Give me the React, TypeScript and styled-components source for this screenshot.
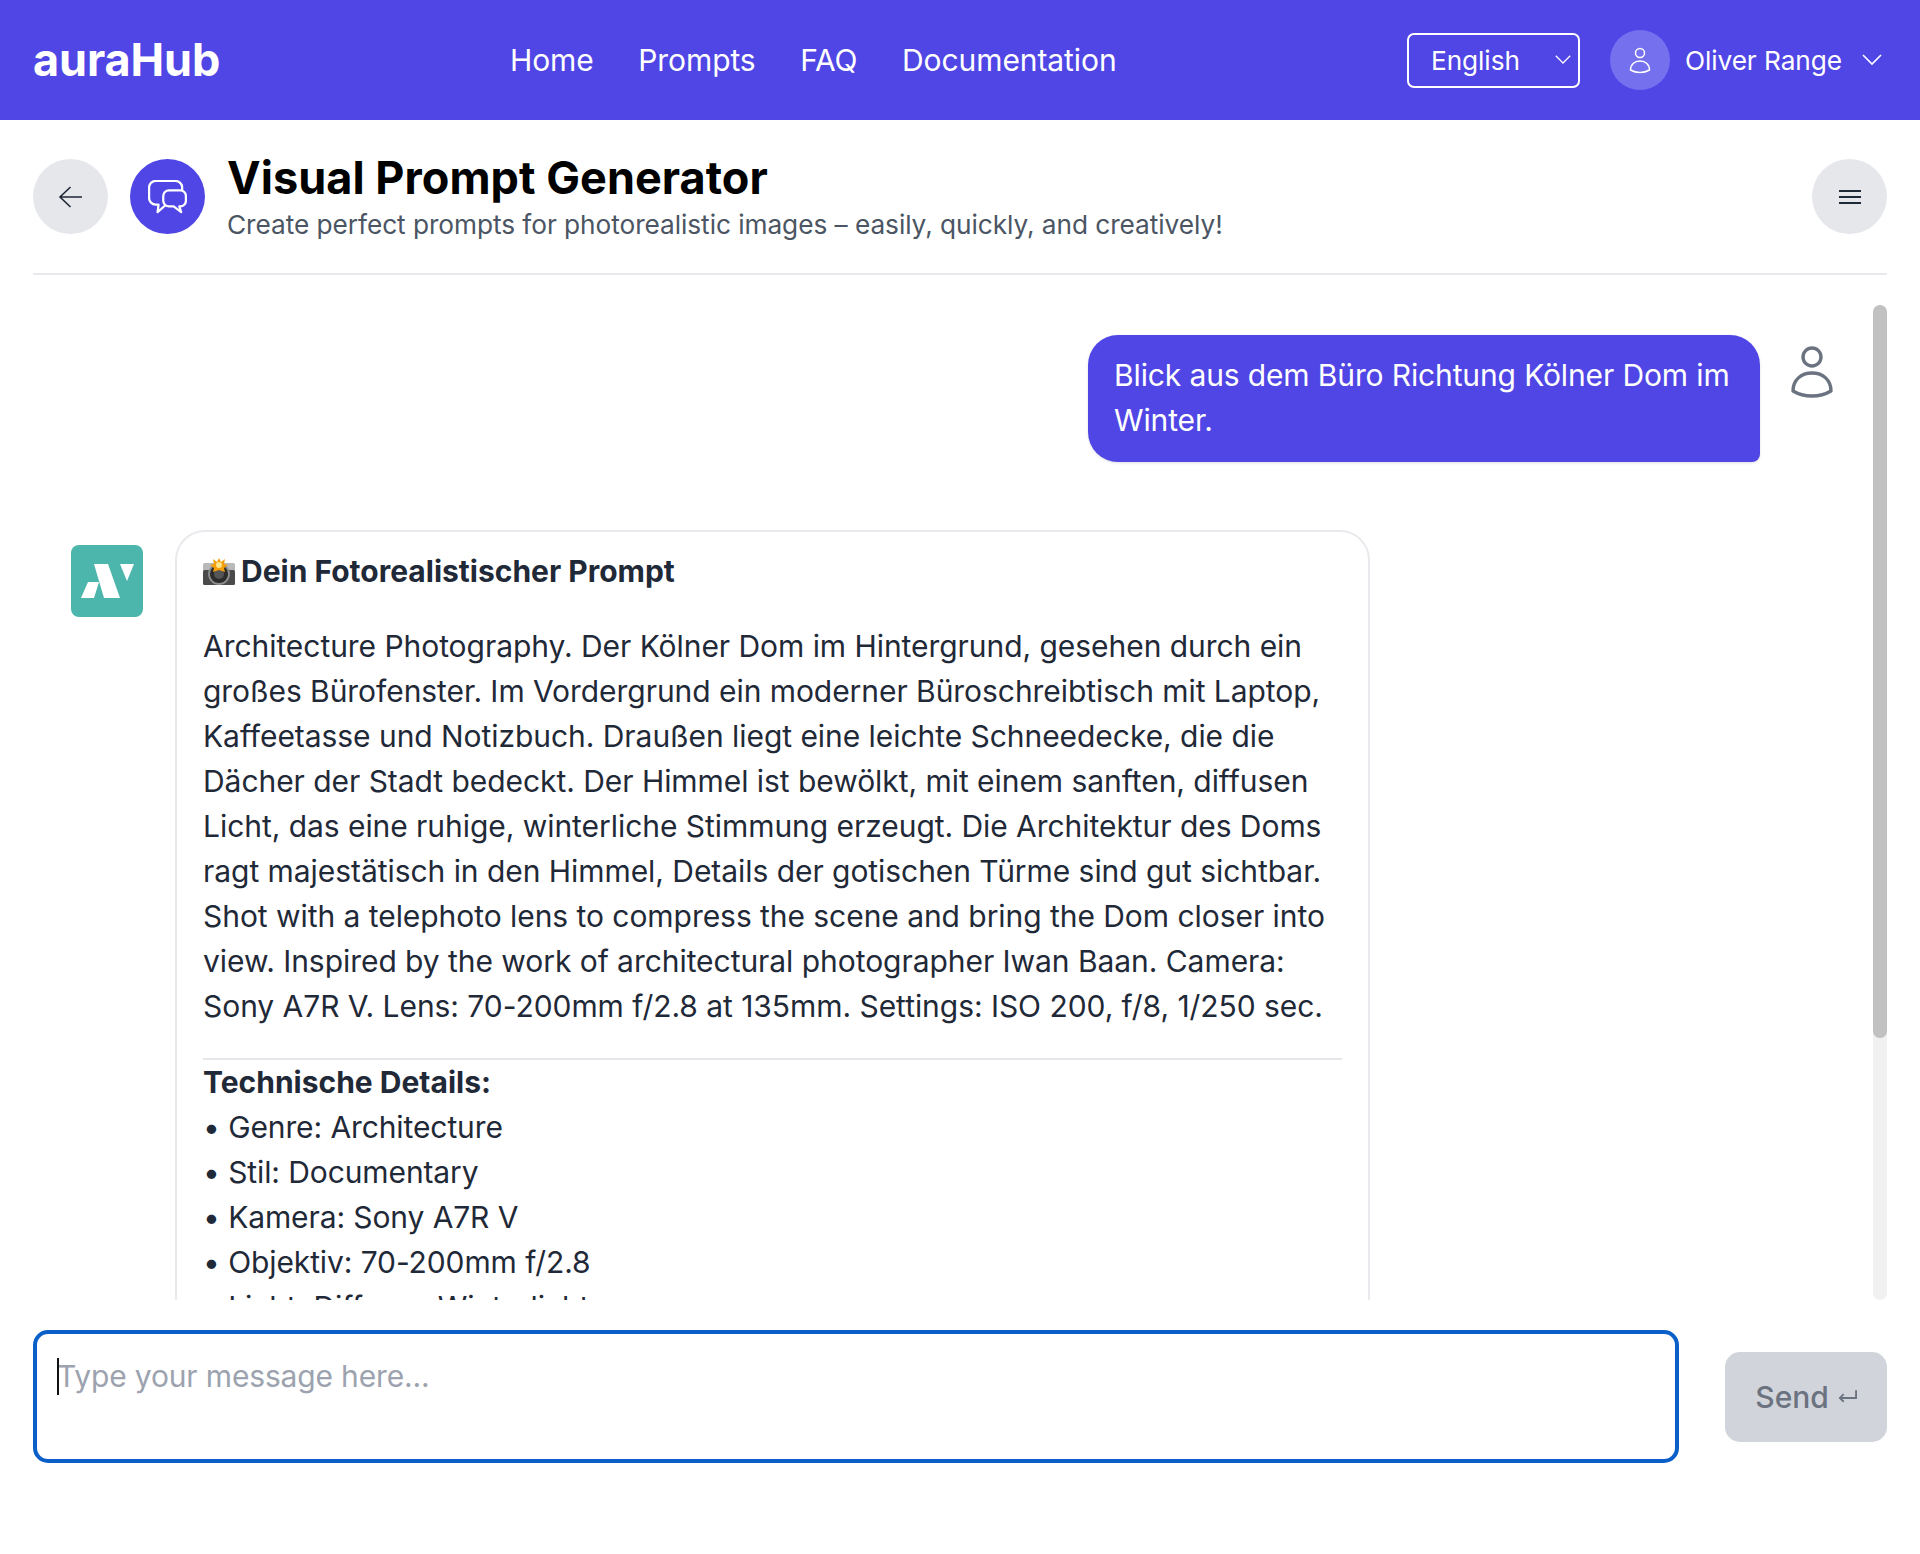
import React from "react";
import styled, { createGlobalStyle } from "styled-components";

const Global = createGlobalStyle`
  html, body { margin: 0; padding: 0; background: #fff; }
  body { font-family: Inter, "Liberation Sans", sans-serif; color: #1f2937; }
  * { box-sizing: border-box; }
`;
const Page = styled.div`
  width: 1920px; height: 1554px; display: flex; flex-direction: column; overflow: hidden; background: #fff;
  letter-spacing: -0.08px;
`;
const Header = styled.header`
  height: 120px; flex: none; background: #4f46e5; color: #fff; display: grid;
  grid-template-columns: 477px 1fr auto; align-items: center; padding: 0 38px 0 33px;
`;
const Logo = styled.div`
  font-size: 45px; font-weight: 700; letter-spacing: -0.1px; line-height: 1; margin-top: -2px;
`;
const Nav = styled.nav`display: flex; gap: 44.5px; font-size: 30px; line-height: 45px;`;
const NavLink = styled.a`color: #fff; text-decoration: none;`;
const HeaderRight = styled.div`display: flex; align-items: center;`;
const LangSelect = styled.div`
  width: 173px; height: 55px; border: 2px solid #fff; border-radius: 7px; display: flex; align-items: center;
  justify-content: space-between; padding: 0 7px 0 22px; font-size: 26.25px; margin-right: 30px;
`;
const UserCircle = styled.div`
  width: 60px; height: 60px; border-radius: 50%; background: #7470ee; display: flex; align-items: center;
  justify-content: center; margin-right: 15px;
`;
const UserName = styled.span`font-size: 26.25px; margin-right: 20px;`;

const Main = styled.main`flex: 1; padding: 0 33px; display: flex; flex-direction: column;`;
const TitleBar = styled.div`
  height: 155px; flex: none; display: flex; align-items: flex-start; padding-top: 39px; border-bottom: 2px solid #e8e9ec;
`;
const RoundButton = styled.div<{ $bg: string }>`
  width: 75px; height: 75px; border-radius: 50%; background: ${(p) => p.$bg}; display: flex; flex: none;
  align-items: center; justify-content: center;
`;
const TitleText = styled.div`margin-left: 22px; flex: 1; margin-top: -9px;`;
const Title = styled.h1`
  margin: 0; font-size: 45px; line-height: 56px; font-weight: 700; color: #000; letter-spacing: 0.05px;
`;
const Subtitle = styled.p`margin: 0; font-size: 26.25px; line-height: 37px; color: #4b5563; letter-spacing: -0.06px;`;
const BackGap = styled.div`width: 22px; flex: none;`;

const ChatArea = styled.div`height: 1025px; flex: none; display: flex;`;
const Scroller = styled.div`
  flex: 1; min-width: 0; overflow: hidden; padding: 60px 38px 0 38px;
`;
const ScrollTrack = styled.div`
  width: 14px; flex: none; margin: 30px 0 0; background: #f1f1f1; border-radius: 7px;
`;
const ScrollThumb = styled.div`height: 733px; background: #c1c1c1; border-radius: 7px;`;
const UserRow = styled.div`display: flex; justify-content: flex-end; gap: 30px;`;
const UserBubble = styled.div`
  width: 672px; height: 127px; background: #4f46e5; color: #fff; border-radius: 30px 30px 8px 30px;
  padding: 18px 15px 18px 26px; font-size: 30px; line-height: 45px; letter-spacing: -0.13px; box-shadow: 0 1px 3px rgba(0,0,0,.12);
`;
const UserIconBox = styled.div`width: 45px; flex: none; padding-top: 10px;`;
const BotRow = styled.div`display: flex; margin-top: 68px; gap: 32px;`;
const BotLogo = styled.div`margin-top: 15px; width: 72px; height: 72px; flex: none;`;
const Card = styled.article`
  width: 1195px; flex: none; border: 2.5px solid #e9eaed; border-radius: 30px; padding: 17px 26px 30px; font-size: 30px; line-height: 45px;
  color: #1f2937;
`;
const CardHeading = styled.div`
  font-weight: 700; display: flex; align-items: center; gap: 6px; margin-bottom: 30px; letter-spacing: 0;
`;
const Para = styled.p`margin: 0; letter-spacing: -0.05px;`;
const Rule = styled.hr`border: 0; border-top: 2px solid #e5e7eb; margin: 29px 0 0;`;
const Strong = styled.div`font-weight: 700; letter-spacing: 0;`;
const ListLine = styled.div`letter-spacing: -0.1px;`;

const InputRow = styled.div`display: flex; align-items: center; gap: 46px; margin-top: 30px;`;
const InputBox = styled.div`
  flex: 1; height: 133px; border: 4px solid #0a60c8; border-radius: 15px; padding: 20px 20px;
  font-size: 30px; line-height: 45px; letter-spacing: -0.16px; color: #9ca3af; position: relative;
`;
const Caret = styled.span`
  position: absolute; left: 20px; top: 24px; width: 2px; height: 37px; background: #111;
`;
const SendButton = styled.div`
  width: 162px; height: 90px; background: #d1d5db; color: #6b7280; border-radius: 15px; font-size: 30px; font-weight: 500;
  display: flex; align-items: center; justify-content: center; gap: 9px; flex: none;
`;

const Chevron = ({ size = 20 }: { size?: number }) => (
  <svg width={size} height={size * 0.6} viewBox="0 0 20 12" fill="none" stroke="#fff" strokeWidth="1.6"><path d="M1 1l9 9 9-9" /></svg>
);
const Person = ({ w, h, color, sw }: { w: number; h: number; color: string; sw: number }) => (
  <svg width={w} height={h} viewBox="0 0 44 54" fill="none" stroke={color} strokeWidth={sw} strokeLinejoin="round">
    <circle cx="22" cy="12" r="9" />
    <path d="M3 46C3 35 11 28 22 28s19 7 19 18c-5 3-12 5-19 5S8 49 3 46z" />
  </svg>
);

const paragraph =
  "Architecture Photography. Der Kölner Dom im Hintergrund, gesehen durch ein großes Bürofenster. Im Vordergrund ein moderner Büroschreibtisch mit Laptop, Kaffeetasse und Notizbuch. Draußen liegt eine leichte Schneedecke, die die Dächer der Stadt bedeckt. Der Himmel ist bewölkt, mit einem sanften, diffusen Licht, das eine ruhige, winterliche Stimmung erzeugt. Die Architektur des Doms ragt majestätisch in den Himmel, Details der gotischen Türme sind gut sichtbar. Shot with a telephoto lens to compress the scene and bring the Dom closer into view. Inspired by the work of architectural photographer Iwan Baan. Camera: Sony A7R V. Lens: 70-200mm f/2.8 at 135mm. Settings: ISO 200, f/8, 1/250 sec.";
const details = ["Genre: Architecture", "Stil: Documentary", "Kamera: Sony A7R V", "Objektiv: 70-200mm f/2.8", "Licht: Diffuses Winterlicht"];

export default function App() {
  return (
    <Page>
      <Global />
      <Header>
        <Logo>auraHub</Logo>
        <Nav>
          <NavLink>Home</NavLink>
          <NavLink>Prompts</NavLink>
          <NavLink>FAQ</NavLink>
          <NavLink>Documentation</NavLink>
        </Nav>
        <HeaderRight>
          <LangSelect>English<Chevron size={16} /></LangSelect>
          <UserCircle><Person w={22} h={27} color="#fff" sw={3} /></UserCircle>
          <UserName>Oliver Range</UserName>
          <Chevron size={20} />
        </HeaderRight>
      </Header>
      <Main>
        <TitleBar>
          <RoundButton $bg="#e5e7eb">
            <svg width="26" height="24" viewBox="1 0 26 24" fill="none" stroke="#1f2937" strokeWidth="1.6"><path d="M25 12H3M13.500 2L3 12l10.500 10" /></svg>
          </RoundButton>
          <BackGap />
          <RoundButton $bg="#4f46e5">
            <svg width="39" height="34" viewBox="17 20 41 36" fill="none" stroke="#fff" strokeWidth="2.4" strokeLinejoin="round">
              <path d="M53 31v-3a7 7 0 0 0-7-7H25a7 7 0 0 0-7 7v11a7 7 0 0 0 7 7h3l-1 8 8-7" />
              <path d="M39 31h12a6 6 0 0 1 6 6v5a6 6 0 0 1-6 6h-1l2 6-8-6h-5a6 6 0 0 1-6-6v-5a6 6 0 0 1 6-6z" />
            </svg>
          </RoundButton>
          <TitleText>
            <Title>Visual Prompt Generator</Title>
            <Subtitle>Create perfect prompts for photorealistic images – easily, quickly, and creatively!</Subtitle>
          </TitleText>
          <RoundButton $bg="#e5e7eb">
            <svg width="24" height="16" viewBox="0 0 24 16" fill="none" stroke="#1f2937" strokeWidth="2"><path d="M1 2h22M1 8h22M1 14h22" /></svg>
          </RoundButton>
        </TitleBar>
        <ChatArea>
          <Scroller>
            <UserRow>
              <UserBubble>Blick aus dem Büro Richtung Kölner Dom im Winter.</UserBubble>
              <UserIconBox><Person w={44} h={54} color="#6b7280" sw={3.4} /></UserIconBox>
            </UserRow>
            <BotRow>
              <BotLogo>
                <svg width="72" height="72" viewBox="0 0 72 72">
                  <rect width="72" height="72" rx="8" fill="#4db6ac" />
                  <path d="M23 19h14l12 34H33z" fill="#fff" />
                  <path d="M10 53l7-16h11l-5 16z" fill="#fff" />
                  <path d="M49 19h14l-7 17z" fill="#fff" />
                </svg>
              </BotLogo>
              <Card>
                <CardHeading>
                  <svg width="32" height="28" viewBox="0 0 32 28">
                    <rect x="0" y="5" width="32" height="8" rx="1.500" fill="#b9b9b9" />
                    <rect x="0" y="12" width="32" height="15" rx="1.500" fill="#4a4a4a" />
                    <circle cx="16" cy="16" r="10" fill="#2c2c2c" stroke="#8e8e8e" strokeWidth="1.800" />
                    <circle cx="16" cy="16" r="5" fill="#555" />
                    <path d="M16 0l2 4 4-3-1 5 4 1-4 3 1 4-6-2-6 2 1-4-4-3 4-1-1-5 4 3z" fill="#f59e0b" />
                    <circle cx="16" cy="7" r="3" fill="#fde68a" />
                  </svg>
                  Dein Fotorealistischer Prompt
                </CardHeading>
                <Para>{paragraph}</Para>
                <Rule />
                <Strong>Technische Details:</Strong>
                {details.map((d) => <ListLine key={d}>• {d}</ListLine>)}
              </Card>
            </BotRow>
          </Scroller>
          <ScrollTrack><ScrollThumb /></ScrollTrack>
        </ChatArea>
        <InputRow>
          <InputBox><Caret />Type your message here...</InputBox>
          <SendButton>
            Send
            <svg width="19" height="16" viewBox="0 0 20 16" fill="none" stroke="#6b7280" strokeWidth="2"><path d="M19 1v8H2M6 5L2 9l4 4" /></svg>
          </SendButton>
        </InputRow>
      </Main>
    </Page>
  );
}
